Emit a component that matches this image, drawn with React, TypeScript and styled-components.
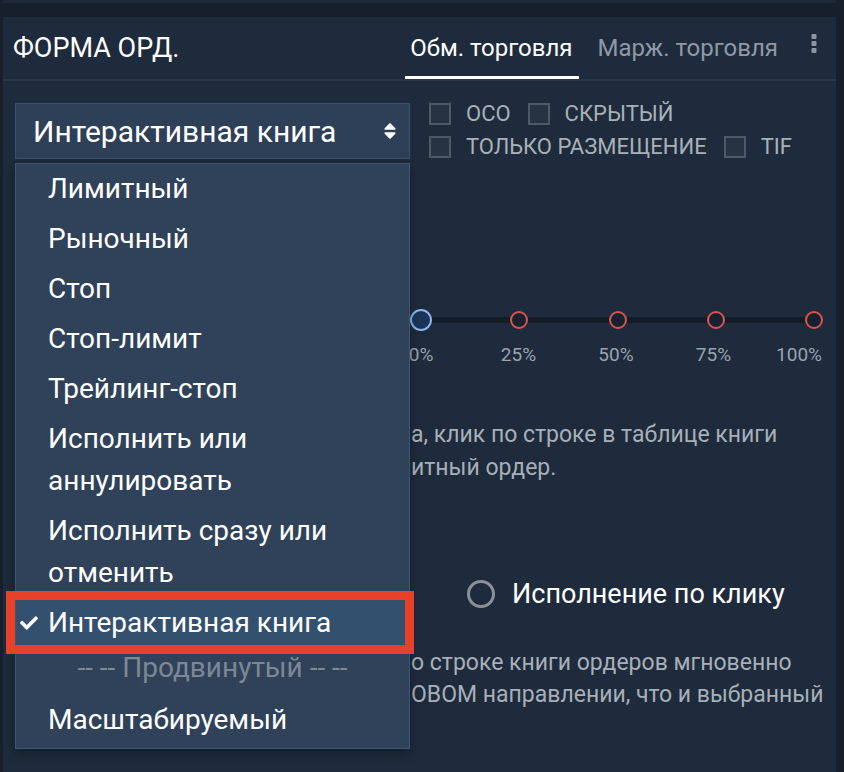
import styled, { createGlobalStyle } from "styled-components";
import { FaCheck, FaSort } from "react-icons/fa";

const GlobalStyle = createGlobalStyle`
  body {
    margin: 0;
    background: #161f2b;
    font-family: Roboto, "Noto Sans", "Liberation Sans", sans-serif;
  }
`;

const Page = styled.div`
  width: 844px;
  height: 772px;
  overflow: hidden;
  display: flex;
  flex-direction: column;
`;

const TopStrip = styled.div`
  height: 3px;
  width: 833px;
  margin-left: 3px;
  background: #1e2a3a;
`;

const Panel = styled.section`
  flex: 1;
  width: 833px;
  margin: 14px 0 0 3px;
  background: #1e2b3c;
`;

const Header = styled.header`
  height: 62px;
  display: flex;
  align-items: stretch;
  padding-left: 10px;
  border-bottom: 2px solid #2b3747;
`;

const Title = styled.h2`
  flex: 1;
  margin: 0;
  align-self: center;
  font-size: 27px;
  font-weight: 400;
  color: #fff;
`;

const Tabs = styled.nav`
  display: flex;
  gap: 14px;
`;

const Tab = styled.div<{ $active?: boolean }>`
  display: flex;
  align-items: center;
  padding: 3px 6px 0 5px;
  font-size: 24px;
  color: ${(p) => (p.$active ? "#ffffff" : "#8e99a5")};
  border-bottom: 3px solid ${(p) => (p.$active ? "#ffffff" : "transparent")};
`;

const Kebab = styled.div`
  display: flex;
  align-items: center;
  padding: 0 19px 10px 27px;
`;

const Body = styled.div`
  padding: 22px 11px 0 12px;
`;

const TopRow = styled.div`
  display: grid;
  grid-template-columns: 395px 1fr;
  column-gap: 19px;
`;

const SelectWrap = styled.div`
  position: relative;
`;

const SelectBox = styled.div`
  height: 54px;
  display: flex;
  align-items: center;
  justify-content: space-between;
  padding: 0 9px 0 17px;
  background: #2e4058;
  border: 1px solid #3a5272;
  color: #fff;
  font-size: 30px;
`;

const Menu = styled.ul`
  position: absolute;
  top: calc(100% + 4px);
  left: 0;
  width: 100%;
  box-sizing: border-box;
  margin: 0;
  padding: 0 0 3px;
  list-style: none;
  background: #2f4259;
  border: 1px solid #3e5676;
  box-shadow: 0 4px 10px rgba(0, 0, 0, 0.35);
  z-index: 5;
`;

const Item = styled.li<{ $selected?: boolean }>`
  position: relative;
  display: flex;
  padding: 4px 10px 4px 0;
  font-size: 28px;
  line-height: 42px;
  color: #fff;
  background: ${(p) => (p.$selected ? "#34506f" : "transparent")};
`;

const Gutter = styled.span`
  flex: 0 0 32px;
  box-sizing: border-box;
  display: flex;
  align-items: center;
  padding-left: 4px;
  font-size: 18px;
`;

const GroupLabel = styled.li`
  margin-bottom: 7px;
  text-align: center;
  font-size: 28px;
  line-height: 40px;
  color: #7c8896;
`;

const Annotation = styled.div`
  position: absolute;
  left: -10px;
  right: -5px;
  top: -7px;
  bottom: -6px;
  border: 9px solid #e8412a;
  pointer-events: none;
`;

const Checks = styled.div`
  display: flex;
  flex-direction: column;
  gap: 11px;
`;

const CheckRow = styled.div`
  display: flex;
  gap: 17px;
`;

const Check = styled.label`
  display: flex;
  align-items: center;
  gap: 15px;
  font-size: 22px;
  line-height: 22px;
  color: #a9b0b8;
`;

const Box = styled.span`
  width: 18px;
  height: 18px;
  border: 2px solid #4e5965;
  background: #263343;
`;

const FormRow = styled.div<{ $top: number }>`
  display: grid;
  grid-template-columns: 395px 1fr;
  margin-top: ${(p) => p.$top}px;
`;

const Slider = styled.div`
  display: flex;
  flex-direction: column;
`;

const Track = styled.div`
  height: 22px;
  display: flex;
  justify-content: space-between;
  align-items: center;
  background: linear-gradient(#131c27, #131c27) center / calc(100% - 22px) 6px
    no-repeat;
`;

const Stop = styled.span<{ $active?: boolean }>`
  width: 22px;
  display: flex;
  justify-content: center;
  &::before {
    content: "";
    box-sizing: border-box;
    width: ${(p) => (p.$active ? 22 : 18)}px;
    height: ${(p) => (p.$active ? 22 : 18)}px;
    border-radius: 50%;
    border: 2px solid ${(p) => (p.$active ? "#8ab4f0" : "#d9534f")};
    background: ${(p) => (p.$active ? "#1c3556" : "#172130")};
  }
`;

const Marks = styled.div`
  display: flex;
  justify-content: space-between;
  margin-top: 14px;
`;

const Mark = styled.span<{ $end?: boolean }>`
  width: 22px;
  display: flex;
  justify-content: ${(p) => (p.$end ? "flex-end" : "center")};
  margin-right: ${(p) => (p.$end ? 3 : 0)}px;
  white-space: nowrap;
  font-size: 19px;
  line-height: 20px;
  color: #9aa3ad;
`;

const Desc = styled.p<{ $top: number; $lh: number }>`
  margin: ${(p) => p.$top}px 0 0;
  padding-left: 396px;
  font-size: 23px;
  line-height: ${(p) => p.$lh}px;
  color: #a7afb8;
  white-space: nowrap;
`;

const Radios = styled.div`
  display: flex;
  margin-top: 89px;
  padding-left: 452px;
  height: 42px;
`;

const Radio = styled.label`
  display: flex;
  align-items: center;
  gap: 17px;
  font-size: 27px;
  color: #fff;
`;

const Ring = styled.span`
  width: 22px;
  height: 22px;
  border-radius: 50%;
  border: 3px solid #8a9096;
`;

const orderTypes = [
  "Лимитный",
  "Рыночный",
  "Стоп",
  "Стоп-лимит",
  "Трейлинг-стоп",
  "Исполнить или аннулировать",
  "Исполнить сразу или отменить",
];

const marks = ["0%", "25%", "50%", "75%", "100%"];

export default function App() {
  return (
    <Page>
      <GlobalStyle />
      <TopStrip />
      <Panel>
        <Header>
          <Title>ФОРМА ОРД.</Title>
          <Tabs>
            <Tab $active>Обм. торговля</Tab>
            <Tab>Марж. торговля</Tab>
          </Tabs>
          <Kebab>
            <svg width="6" height="19" viewBox="0 0 6 19">
              <rect x="0.5" y="0" width="5" height="5" rx="1" fill="#8c97a3" />
              <rect x="0.5" y="7" width="5" height="5" rx="1" fill="#8c97a3" />
              <rect x="0.5" y="14" width="5" height="5" rx="1" fill="#8c97a3" />
            </svg>
          </Kebab>
        </Header>

        <Body>
          <TopRow>
            <SelectWrap>
              <SelectBox>
                Интерактивная книга
                <FaSort size={20} />
              </SelectBox>
              <Menu>
                {orderTypes.map((t) => (
                  <Item key={t}>
                    <Gutter />
                    {t}
                  </Item>
                ))}
                <Item $selected>
                  <Gutter>
                    <FaCheck />
                  </Gutter>
                  Интерактивная книга
                  <Annotation />
                </Item>
                <GroupLabel>-- -- Продвинутый -- --</GroupLabel>
                <Item>
                  <Gutter />
                  Масштабируемый
                </Item>
              </Menu>
            </SelectWrap>
            <Checks>
              <CheckRow>
                <Check>
                  <Box />
                  ОСО
                </Check>
                <Check>
                  <Box />
                  СКРЫТЫЙ
                </Check>
              </CheckRow>
              <CheckRow>
                <Check>
                  <Box />
                  ТОЛЬКО РАЗМЕЩЕНИЕ
                </Check>
                <Check>
                  <Box />
                  TIF
                </Check>
              </CheckRow>
            </Checks>
          </TopRow>

          <FormRow $top={150}>
            <span />
            <Slider>
              <Track>
                {marks.map((m, i) => (
                  <Stop key={m} $active={i === 0} />
                ))}
              </Track>
              <Marks>
                {marks.map((m, i) => (
                  <Mark key={m} $end={i === marks.length - 1}>
                    {m}
                  </Mark>
                ))}
              </Marks>
            </Slider>
          </FormRow>

          <Desc $top={53} $lh={33}>
            а, клик по строке в таблице книги
            <br />
            итный ордер.
          </Desc>

          <Radios>
            <Radio>
              <Ring />
              Исполнение по клику
            </Radio>
          </Radios>

          <Desc $top={32} $lh={32}>
            о строке книги ордеров мгновенно
            <br />
            ОВОМ направлении, что и выбранный
          </Desc>
        </Body>
      </Panel>
    </Page>
  );
}
